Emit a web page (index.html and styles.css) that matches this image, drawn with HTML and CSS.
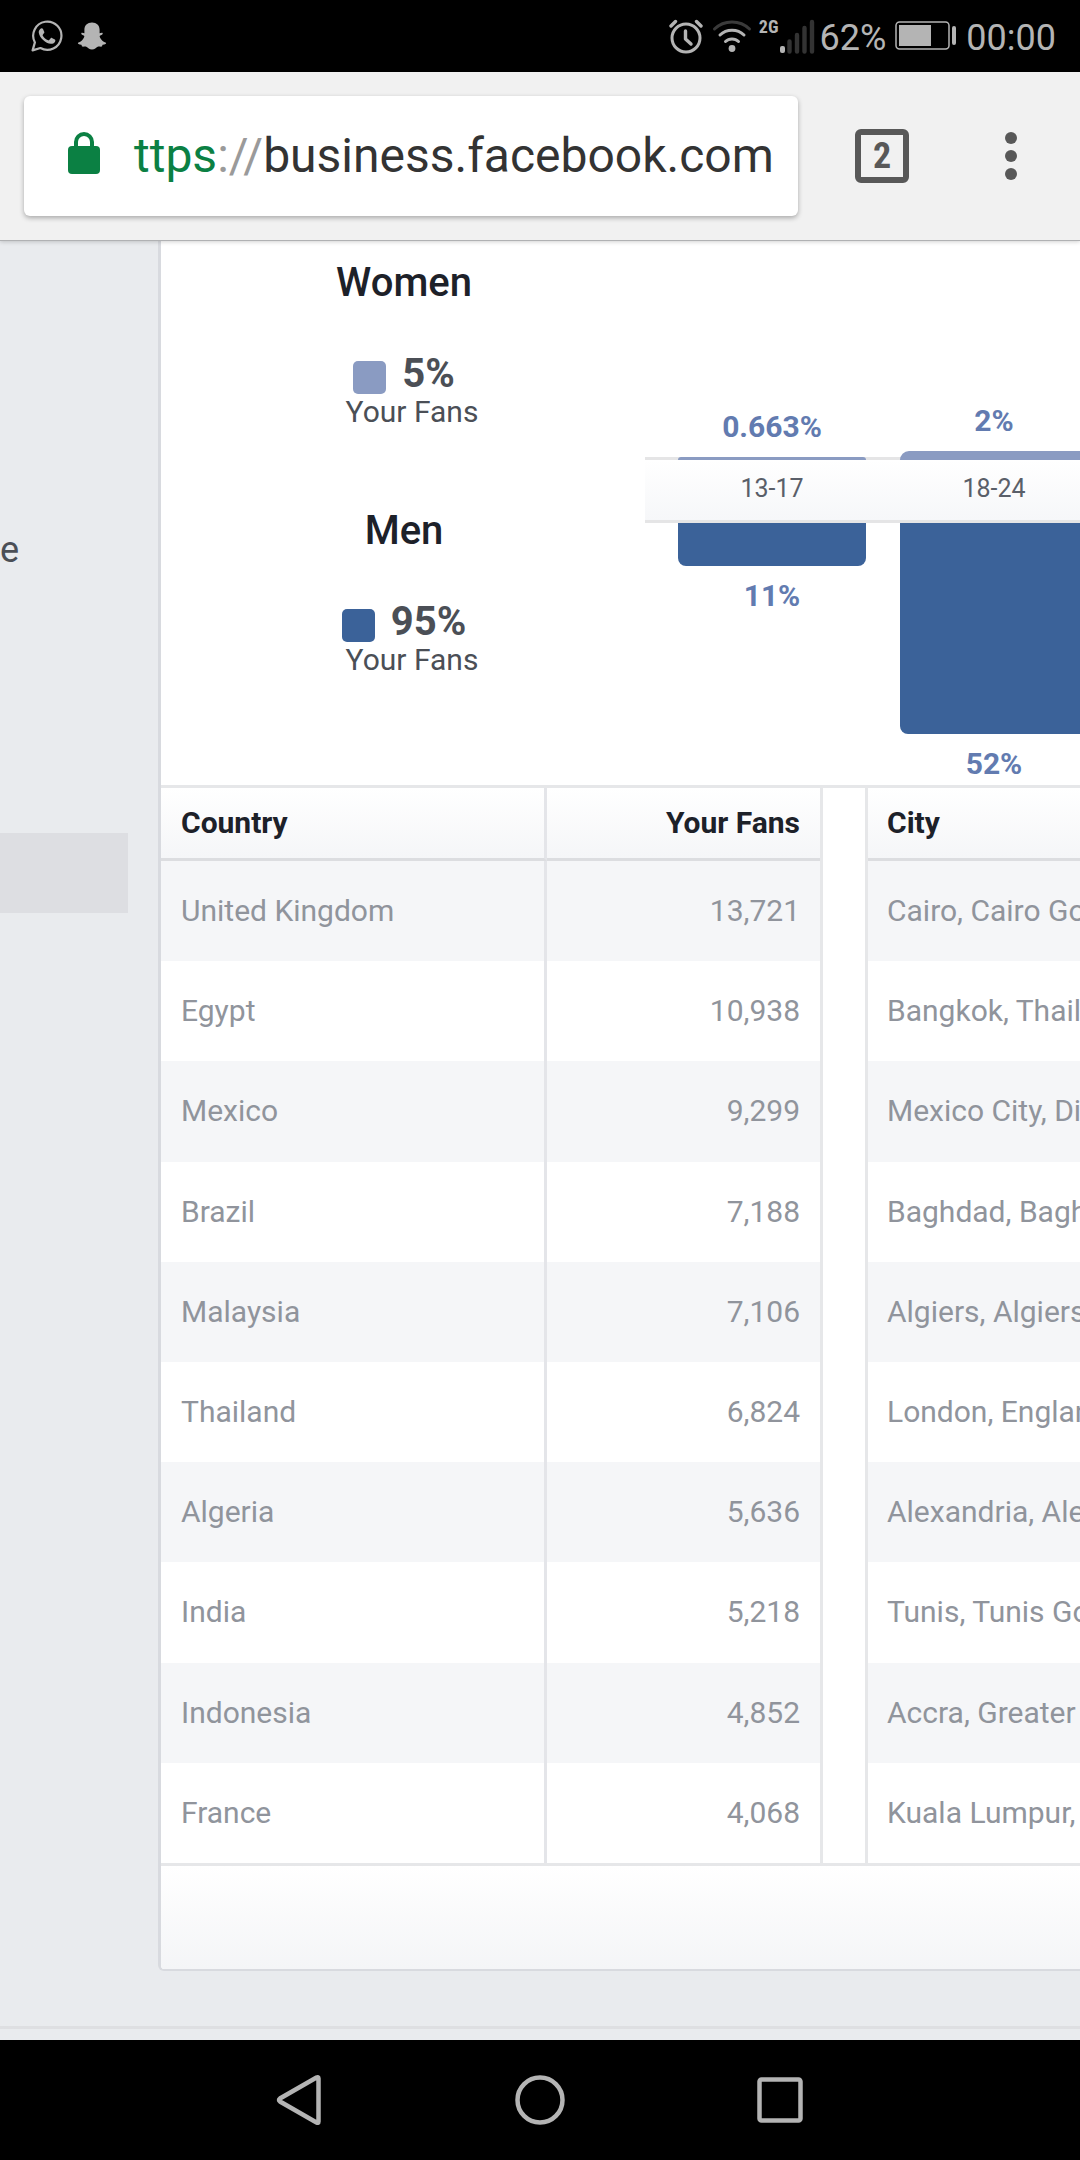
FILE: index.html
```html
<!DOCTYPE html>
<html lang="en">
<head>
<meta charset="utf-8">
<meta name="viewport" content="width=device-width, initial-scale=1">
<title>Your Fans</title>
<link rel="stylesheet" href="styles.css">
</head>
<body>
<div class="status">
  <div class="status-group status-apps">
    <svg width="32" height="32" viewBox="0 0 32 32" role="img" aria-label="WhatsApp">
      <path d="M1.6 30.4 3.9 22.4A14.1 14.1 0 1 1 9.4 28Z" fill="none" stroke="#b4b4b4" stroke-width="2.2" stroke-linejoin="round"/>
      <path d="M9 9.3c.9-1.2 2.5-1.4 3-.2l1.3 3c.2.6-.1 1-1.500 2.600-.3.4-.2.7 0 1 1.300 2.200 3 3.600 5.400 4.600.4.200.7.100 1-.200l1.500-1.900c.4-.4.8-.4 1.200-.2l3 1.500c.7.4.5 1.500 0 2.400-.7 1.200-2.700 2-4 1.900C14.500 23.300 8.700 18 7.800 12.700c-.2-1.400.4-2.500 1.200-3.400Z" fill="#b4b4b4"/>
    </svg>
    <svg width="30" height="28" viewBox="0 0 30 28" role="img" aria-label="Snapchat">
      <path d="M15 .5c4.600 0 7.600 2.900 7.600 7.200v3.600c1-.1 2.600-1 3.100-.1.600 1.200-1.700 1.800-2.800 2.600-.8.800.5 2.700 1.800 4.200 1.200 1.300 2.800 2.200 4.300 2.700.6.900-.9 1.700-3.300 2.100-.6.200-.3 1.600-1 1.800-1.300.2-2.700-.3-4 .1-1.700.6-2.900 2.900-5.700 2.900s-4-2.300-5.700-2.900c-1.300-.4-2.700.1-4-.1-.7-.2-.4-1.600-1-1.800C1.900 22.400.4 21.600 1 20.700c1.500-.5 3.100-1.400 4.300-2.700 1.300-1.500 2.600-3.400 1.800-4.200-1.100-.8-3.400-1.400-2.800-2.600.5-.9 2.100 0 3.100.1V7.700C7.400 3.400 10.400.5 15 .5Z" fill="#b4b4b4"/>
    </svg>
  </div>
  <div class="status-group status-system">
    <svg width="34" height="36" viewBox="0 0 34 36" role="img" aria-label="Alarm" fill="none" stroke="#b4b4b4" stroke-linecap="round">
      <circle cx="17" cy="20" r="14" stroke-width="3"/>
      <path d="M16.500 13V21L22 26" stroke-width="3.400" stroke-linejoin="round"/>
      <path d="M2 8 6.500 3.500M32 8 27.500 3.500" stroke-width="3.400"/>
    </svg>
    <svg width="40" height="36" viewBox="0 0 40 36" role="img" aria-label="Wi-Fi" fill="none" stroke="#b4b4b4" stroke-width="3" stroke-linecap="round">
      <path d="M2.500 11C12 1.600 28 1.600 37.500 11" stroke="#3a3a3a"/>
      <path d="M8 17C14.500 10.500 25.500 10.500 32 17M13.500 23.500C17 20 23 20 26.500 23.500"/>
      <circle cx="20" cy="30.500" r="3.400" fill="#b4b4b4" stroke="none"/>
    </svg>
    <div class="network">
      <span class="network-type">2G</span>
      <svg width="36" height="36" viewBox="0 0 36 36" role="img" aria-label="Signal">
        <rect x="1" y="28" width="5" height="7" rx="2" fill="#b4b4b4"/>
        <path d="M10.500 23.500V33.500M18 17V33.500M25.500 10V33.500M33 4V33.500" stroke="#333" stroke-width="4.400" stroke-linecap="round"/>
      </svg>
    </div>
    <span class="battery-level">62%</span>
    <svg width="62" height="30" viewBox="0 0 62 30" role="img" aria-label="Battery">
      <rect x="1" y="1" width="53" height="27" rx="3.500" fill="none" stroke="#b4b4b4" stroke-width="1.500"/>
      <rect x="4" y="4" width="32" height="21" fill="#b4b4b4"/>
      <rect x="57" y="5" width="4" height="19" rx="2" fill="#b4b4b4"/>
    </svg>
    <time class="clock">00:00</time>
  </div>
</div>

<header class="toolbar">
  <div class="omnibox">
    <svg width="32" height="42" viewBox="0 0 32 42" role="img" aria-label="Secure">
      <rect y="14" width="32" height="28" rx="4" fill="#0b8043"/>
      <path d="M8 15V10a8 8 0 0 1 16 0v5" fill="none" stroke="#0b8043" stroke-width="4"/>
    </svg>
    <a class="url" href="#"><span class="url-scheme">ttps</span><span class="url-sep">://</span>business.facebook.com</a>
  </div>
  <button class="tabs" type="button" aria-label="Open tabs">2</button>
  <button class="menu" type="button" aria-label="Menu">
    <svg width="12" height="48" viewBox="0 0 12 48" fill="#585858"><circle cx="6" cy="6" r="6"/><circle cx="6" cy="24" r="6"/><circle cx="6" cy="42" r="6"/></svg>
  </button>
</header>

<main class="page">
  <div class="columns">
    <nav class="side">
      <a class="side-item" href="#">e</a>
      <a class="side-item side-current" href="#" aria-label="People"></a>
    </nav>
    <section class="card">
      <div class="demographics">
        <div class="legend">
          <section class="group">
            <h2>Women</h2>
            <p class="share"><span class="swatch women"></span>5%</p>
            <p class="share-label">Your Fans</p>
          </section>
          <section class="group">
            <h2>Men</h2>
            <p class="share"><span class="swatch men"></span>95%</p>
            <p class="share-label">Your Fans</p>
          </section>
        </div>
        <div class="chart">
          <div class="bars bars-women">
            <div class="bar-col"><span>0.663%</span><div class="bar women" style="height:3px"></div></div>
            <div class="bar-col"><span>2%</span><div class="bar women" style="height:9px"></div></div>
          </div>
          <div class="ages"><span>13-17</span><span>18-24</span></div>
          <div class="bars bars-men">
            <div class="bar-col"><div class="bar men" style="height:43px"></div><span>11%</span></div>
            <div class="bar-col"><div class="bar men" style="height:211px"></div><span>52%</span></div>
          </div>
        </div>
      </div>
      <div class="tables">
        <table class="countries">
          <thead><tr><th>Country</th><th class="num">Your Fans</th></tr></thead>
          <tbody>
            <tr><td>United Kingdom</td><td class="num">13,721</td></tr>
            <tr><td>Egypt</td><td class="num">10,938</td></tr>
            <tr><td>Mexico</td><td class="num">9,299</td></tr>
            <tr><td>Brazil</td><td class="num">7,188</td></tr>
            <tr><td>Malaysia</td><td class="num">7,106</td></tr>
            <tr><td>Thailand</td><td class="num">6,824</td></tr>
            <tr><td>Algeria</td><td class="num">5,636</td></tr>
            <tr><td>India</td><td class="num">5,218</td></tr>
            <tr><td>Indonesia</td><td class="num">4,852</td></tr>
            <tr><td>France</td><td class="num">4,068</td></tr>
          </tbody>
        </table>
        <table class="cities">
          <thead><tr><th>City</th></tr></thead>
          <tbody>
            <tr><td>Cairo, Cairo Governorate</td></tr>
            <tr><td>Bangkok, Thailand</td></tr>
            <tr><td>Mexico City, Distrito Federal</td></tr>
            <tr><td>Baghdad, Baghdad</td></tr>
            <tr><td>Algiers, Algiers</td></tr>
            <tr><td>London, England</td></tr>
            <tr><td>Alexandria, Alexandria</td></tr>
            <tr><td>Tunis, Tunis Governorate</td></tr>
            <tr><td>Accra, Greater Accra</td></tr>
            <tr><td>Kuala Lumpur, Malaysia</td></tr>
          </tbody>
        </table>
      </div>
      <div class="card-footer"></div>
    </section>
  </div>
  <div class="page-end"></div>
</main>

<nav class="keys">
  <button type="button" aria-label="Back"><svg width="50" height="52" viewBox="0 0 50 52"><path d="M43.500 4.500V47.500Q43.500 49.500 41.500 48.500L5 27.500Q3 26 5 24.500L41.500 3.500Q43.500 2.500 43.500 4.500Z"/></svg></button>
  <button type="button" aria-label="Home"><svg width="50" height="50" viewBox="0 0 50 50"><circle cx="25" cy="25" r="22.500"/></svg></button>
  <button type="button" aria-label="Recent apps"><svg width="46" height="46" viewBox="0 0 46 46"><rect x="2.500" y="2.500" width="41" height="41" rx="2"/></svg></button>
</nav>
</body>
</html>
```
FILE: styles.css
```css
* { box-sizing: border-box; }

body {
  margin: 0;
  min-height: 100vh;
  display: flex;
  flex-direction: column;
  background: #e9ebee;
  color: #4b4f56;
  font: 30px/36px Roboto, "Liberation Sans", sans-serif;
  overflow-x: hidden;
}

h2, p { margin: 0; }
a { color: inherit; text-decoration: none; }
svg { display: block; flex: none; }

button {
  border: 0;
  padding: 0;
  background: none;
  font: inherit;
  display: flex;
  align-items: center;
  justify-content: center;
}

/* Status bar */
.status {
  height: 72px;
  padding: 0 24px 0 31px;
  display: flex;
  justify-content: space-between;
  align-items: center;
  background: #000;
  color: #b4b4b4;
  font-size: 36px;
  line-height: 44px;
}
.status-group { display: flex; align-items: center; }
.status-apps { gap: 14px; }
.status-system { gap: 9px; }
.network { display: flex; align-items: flex-start; margin-left: -2px; }
.network-type {
  font: bold 18px/18px "Roboto Condensed", Roboto, sans-serif;
}
.battery-level { margin-left: -4px; }
.battery-level, .clock { padding-top: 4px; }

/* Browser toolbar */
.toolbar {
  position: relative;
  height: 168px;
  padding: 0 60px 0 24px;
  display: flex;
  align-items: center;
  background: #f1f1f1;
  box-shadow: 0 1px 0 #b0b1b3, 0 2px 4px rgba(0, 0, 0, .18);
}
.omnibox {
  flex: 1;
  min-width: 0;
  height: 120px;
  padding-left: 44px;
  display: flex;
  align-items: center;
  gap: 34px;
  overflow: hidden;
  border-radius: 6px;
  background: #fff;
  box-shadow: 0 2px 5px rgba(0, 0, 0, .3);
}
.omnibox svg { margin-bottom: 6px; }
.url {
  color: #333;
  font-size: 48px;
  line-height: 56px;
  white-space: nowrap;
}
.url-scheme { color: #0b8043; }
.url-sep { color: #9a9a9a; }
.tabs {
  width: 54px;
  height: 54px;
  margin: 0 93px 0 57px;
  border: 6px solid #585858;
  border-radius: 6px;
  color: #585858;
  font: bold 36px/40px "Roboto Condensed", Roboto, sans-serif;
}
.menu { padding: 0 3px; }

/* Page */
.page { flex: 1; overflow: hidden; }
.columns { display: flex; }
.side {
  width: 158px;
  flex: none;
  padding: 270px 30px 0 0;
}
.side-item {
  display: flex;
  align-items: center;
  height: 80px;
  font-size: 36px;
  line-height: 44px;
}
.side-current { margin-top: 243px; background: #dddee2; }

.card {
  flex: 1;
  min-width: 0;
  border: solid #d8dadf;
  border-width: 0 0 2px 3px;
  border-radius: 0 0 0 6px;
  background: #fff;
  overflow: hidden;
}

/* Age and gender chart */
.demographics { display: flex; height: 545px; overflow: hidden; }
.legend {
  width: 484px;
  flex: none;
  padding: 19px 0 0 2px;
  display: flex;
  flex-direction: column;
  gap: 77px;
  text-align: center;
}
.group h2 {
  margin-bottom: 47px;
  color: #1d2129;
  font-size: 40px;
  font-weight: 500;
  line-height: 48px;
}
.share {
  display: flex;
  justify-content: center;
  align-items: flex-end;
  gap: 16px;
  font-size: 40px;
  font-weight: bold;
  line-height: 40px;
}
.share-label { padding-left: 16px; }
.swatch { width: 33px; height: 33px; border-radius: 5px; }
.women { background: #8a9bc2; }
.men { background: #3b6299; }

.chart { flex: 1; min-width: 0; overflow: hidden; }
.bars, .ages {
  display: grid;
  grid-template-columns: repeat(2, 222px);
  padding-left: 16px;
}
.bars { color: #627bb0; font-weight: bold; text-align: center; }
.bars-women { height: 220px; margin-bottom: -3px; position: relative; }
.bar-col {
  display: flex;
  flex-direction: column;
  gap: 12px;
  padding: 0 17px;
}
.bars-women .bar-col { justify-content: flex-end; }
.bars-women .bar { border-radius: 9px 9px 0 0; }
.bars-men .bar { border-radius: 0 0 8px 8px; }
.ages {
  height: 66px;
  padding-bottom: 2px;
  align-items: center;
  border: solid #e5e5e6;
  border-width: 3px 0;
  background: linear-gradient(#fff, #f6f7f9);
  color: #5a5f69;
  font-size: 25px;
  text-align: center;
}

/* Tables */
.tables {
  display: grid;
  grid-template-columns: 662px minmax(0, 1fr);
  gap: 42px;
  border: solid #e6e7e9;
  border-width: 3px 0;
}
table {
  width: 100%;
  height: 1075px;
  table-layout: fixed;
  border-collapse: separate;
  border-spacing: 0;
}
th, td {
  padding: 0 20px;
  text-align: left;
  white-space: nowrap;
  overflow: hidden;
}
th {
  height: 73px;
  border-bottom: 3px solid #dcdde0;
  background: linear-gradient(#fff, #f5f6f8);
  color: #1d2129;
}
td { height: 100px; color: #90949c; }
tbody tr:nth-child(odd) { background: #f5f6f8; }
.countries { border-right: 3px solid #e6e7e9; }
.countries th:first-child { width: 386px; }
.countries th:first-child, .countries td:first-child { border-right: 3px solid #e4e5e9; }
.cities { border-left: 3px solid #e6e7e9; }
.cities th, .cities td { padding-left: 19px; }
th.num, td.num { text-align: right; }

.card-footer { height: 103px; background: linear-gradient(#fff, #f4f5f7); }
.page-end { margin-top: 55px; border-top: 3px solid #dedfe2; }

/* System keys */
.keys {
  height: 120px;
  padding: 0 180px;
  display: grid;
  grid-template-columns: repeat(3, 1fr);
  background: #000;
}
.keys svg { fill: none; stroke: #b4b4b4; stroke-width: 4.5; }
```
